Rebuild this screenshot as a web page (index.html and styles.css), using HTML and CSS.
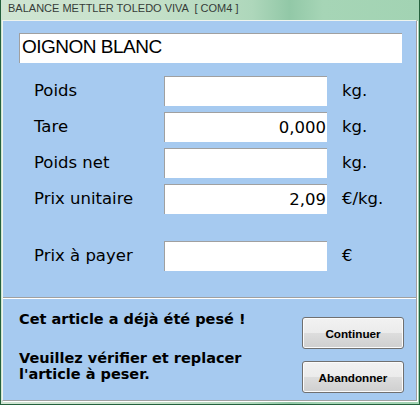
FILE: index.html
```html
<!DOCTYPE html>
<html lang="fr">
<head>
<meta charset="utf-8">
<title>BALANCE METTLER TOLEDO VIVA</title>
<link rel="stylesheet" href="styles.css">
</head>
<body>
<div class="window">
  <div class="titlebar"><span class="title">BALANCE METTLER TOLEDO VIVA  [ COM4 ]</span></div>
  <div class="client">
    <div class="top">
      <div class="name-field">OIGNON BLANC</div>
      <div class="form">
        <div class="label">Poids</div><div class="field"></div><div class="unit">kg.</div>
        <div class="label">Tare</div><div class="field">0,000</div><div class="unit">kg.</div>
        <div class="label">Poids net</div><div class="field"></div><div class="unit">kg.</div>
        <div class="label">Prix unitaire</div><div class="field">2,09</div><div class="unit">€/kg.</div>
      </div>
      <div class="form pay">
        <div class="label">Prix à payer</div><div class="field"></div><div class="unit">€</div>
      </div>
    </div>
    <div class="bottom">
      <div class="message">
        <p class="msg1">Cet article a déjà été pesé !</p>
        <p class="msg2">Veuillez vérifier et replacer<br>l'article à peser.</p>
      </div>
      <div class="buttons">
        <button class="btn">Continuer</button>
        <button class="btn">Abandonner</button>
      </div>
    </div>
  </div>
</div>
</body>
</html>
```
FILE: styles.css
```css
html, body {
  margin: 0;
  padding: 0;
}
body {
  width: 420px;
  height: 405px;
  overflow: hidden;
  background: #9fd1b0;
}
.window {
  width: 420px;
  height: 405px;
  box-sizing: border-box;
  border: 1px solid #24613d;
  border-top: none;
  padding: 0 2px 3px 1px;
  display: flex;
  flex-direction: column;
  background: linear-gradient(90deg, #d0e5d3 0%, #c6e1ca 35%, #aed7bb 60%, #92c8a7 69%, #a6d5b6 77%, #a2d3b3 100%);
}
.titlebar {
  height: 20px;
  flex: none;
}
.title {
  display: block;
  padding-left: 6px;
  line-height: 17px;
  font-family: "Liberation Sans", Arial, sans-serif;
  font-size: 11px;
  color: #363c38;
  white-space: pre;
}
.client {
  flex: 1;
  display: flex;
  flex-direction: column;
  background: #a6caf0;
  border: 1px solid;
  border-color: #eef4ee #a0a0a0 #a0a0a0 #eef4ee;
  box-shadow: 1px 1px 0 #ffffff;
  font-family: "DejaVu Sans", Verdana, sans-serif;
  color: #000;
}
.top {
  height: 276px;
  box-sizing: border-box;
  padding-top: 12px;
  flex: none;
}
.name-field {
  margin: 0 14px 0 16px;
  height: 30px;
  box-sizing: border-box;
  background: #fff;
  border-top: 1px solid #a0a0a0;
  border-left: 1px solid #a0a0a0;
  padding: 0 0 3px 2px;
  font-family: "Liberation Sans", Arial, sans-serif;
  font-size: 19px;
  letter-spacing: -0.5px;
  line-height: 26px;
}
.form {
  display: grid;
  grid-template-columns: 130px 163px auto;
  grid-auto-rows: 30px;
  row-gap: 6px;
  padding-left: 31px;
  margin-top: 13px;
  font-size: 16.5px;
}
.form.pay {
  margin-top: 27px;
}
.label, .unit {
  line-height: 30px;
  white-space: nowrap;
}
.unit {
  padding-left: 15px;
}
.field {
  box-sizing: border-box;
  background: #fff;
  border-top: 1px solid #a0a0a0;
  border-left: 1px solid #a0a0a0;
  text-align: right;
  padding-right: 1px;
  line-height: 29px;
}
.bottom {
  flex: 1;
  display: flex;
  justify-content: space-between;
  align-items: flex-start;
  border-top: 1px solid #a0a0a0;
  box-shadow: inset 0 1px 0 #ffffff;
  padding: 13px 12px 0 16px;
}
.message {
  font-family: "DejaVu Sans", Verdana, sans-serif;
  font-weight: bold;
  font-size: 14.5px;
  line-height: 16px;
}
.message p {
  margin: 0;
}
.msg1 {
  margin-bottom: 23px !important;
}
.buttons {
  display: flex;
  flex-direction: column;
  gap: 12px;
  margin-top: 6px;
}
.btn {
  width: 102px;
  height: 32px;
  margin: 0;
  padding: 0;
  border: 1px solid #707070;
  border-radius: 3px;
  background: linear-gradient(#f2f2f2 0%, #ebebeb 50%, #dddddd 50%, #cfcfcf 100%);
  box-shadow: inset 0 0 0 1px #fbfbfb;
  font-family: "Liberation Sans", Arial, sans-serif;
  font-weight: bold;
  font-size: 11.7px;
  color: #000;
}
```
